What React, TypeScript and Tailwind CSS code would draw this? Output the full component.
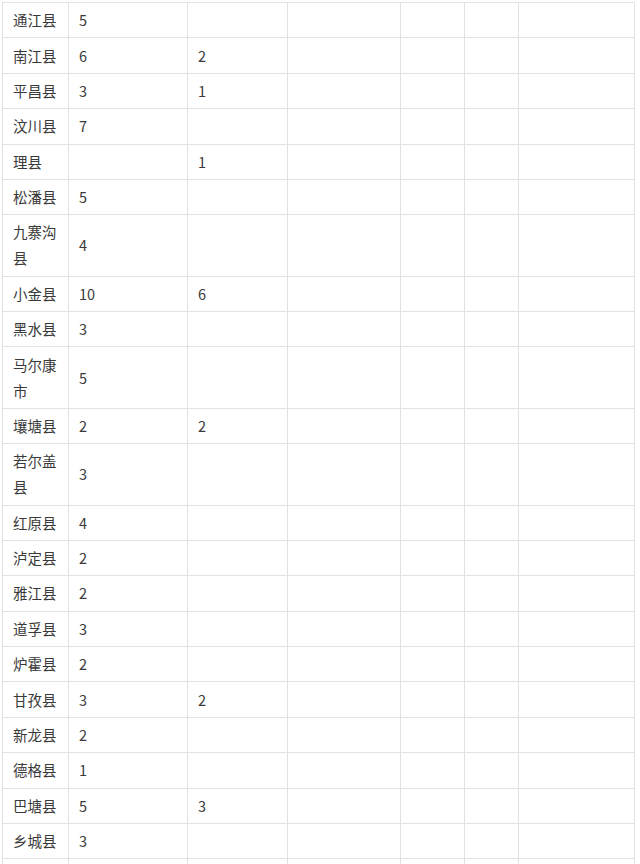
const rows: [string, string, string][] = [
  ['通江县', '5', ''],
  ['南江县', '6', '2'],
  ['平昌县', '3', '1'],
  ['汶川县', '7', ''],
  ['理县', '', '1'],
  ['松潘县', '5', ''],
  ['九寨沟县', '4', ''],
  ['小金县', '10', '6'],
  ['黑水县', '3', ''],
  ['马尔康市', '5', ''],
  ['壤塘县', '2', '2'],
  ['若尔盖县', '3', ''],
  ['红原县', '4', ''],
  ['泸定县', '2', ''],
  ['雅江县', '2', ''],
  ['道孚县', '3', ''],
  ['炉霍县', '2', ''],
  ['甘孜县', '3', '2'],
  ['新龙县', '2', ''],
  ['德格县', '1', ''],
  ['巴塘县', '5', '3'],
  ['乡城县', '3', ''],
  ['', '', ''],
];

const widths = [66, 119, 100, 113, 64, 54, 116];

export default function App() {
  return (
    <div className="min-h-screen bg-white pt-[2px] pl-[2px] font-['Noto_Sans_CJK_SC',sans-serif] text-[14.5px] leading-[26px] text-[#3a3a3a]">
      <table className="table-fixed border-collapse w-[632px]">
        <colgroup>
          {widths.map((w, i) => (
            <col key={i} style={{ width: w }} />
          ))}
        </colgroup>
        <tbody>
          {rows.map(([name, a, b], i) => (
            <tr key={i}>
              <td className="border border-[#e2e2e2] px-[10px] py-[4.2px] align-middle break-all">{name}</td>
              <td className="border border-[#e2e2e2] px-[10px] py-[4.2px] align-middle">{a}</td>
              <td className="border border-[#e2e2e2] px-[10px] py-[4.2px] align-middle">{b}</td>
              <td className="border border-[#e2e2e2] px-[10px] py-[4.2px]"></td>
              <td className="border border-[#e2e2e2] px-[10px] py-[4.2px]"></td>
              <td className="border border-[#e2e2e2] px-[10px] py-[4.2px]"></td>
              <td className="border border-[#e2e2e2] px-[10px] py-[4.2px]"></td>
            </tr>
          ))}
        </tbody>
      </table>
      <div className="h-[1px]" />
    </div>
  );
}
